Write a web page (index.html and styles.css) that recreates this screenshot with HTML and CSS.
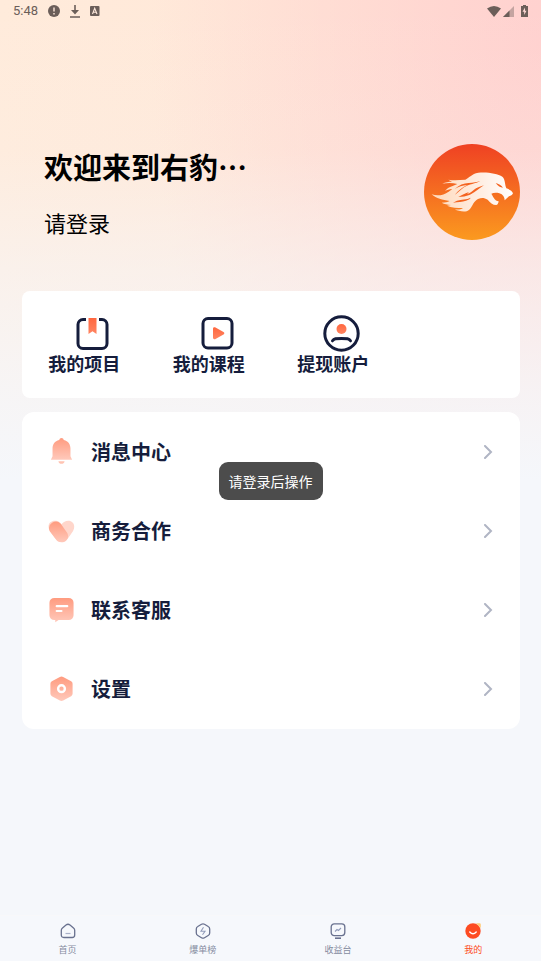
FILE: index.html
```html
<!DOCTYPE html>
<html lang="zh-CN">
<head>
<meta charset="utf-8">
<meta name="viewport" content="width=device-width, initial-scale=1">
<title>我的</title>
<link rel="stylesheet" href="styles.css">
</head>
<body>
<svg class="defs" width="0" height="0" aria-hidden="true">
  <defs>
    <linearGradient id="peach" x1="0" y1="0" x2="0" y2="1"><stop offset="0" stop-color="#ff9b7f"/><stop offset="1" stop-color="#ffc9bb"/></linearGradient>
    <linearGradient id="coral" x1="0" y1="0" x2="0" y2="1"><stop offset="0" stop-color="#ff673f"/><stop offset="1" stop-color="#ff8562"/></linearGradient>
    <linearGradient id="flame" x1="0" y1="0" x2="0" y2="1"><stop offset="0" stop-color="#ef4123"/><stop offset="1" stop-color="#fb9a1f"/></linearGradient>
    <linearGradient id="mane" x1="0" y1="0" x2="1" y2="0"><stop offset="0" stop-color="#ffd9bb"/><stop offset=".65" stop-color="#fff0e6"/><stop offset="1" stop-color="#ffffff"/></linearGradient>
  </defs>
</svg>
<div class="app">
  <header class="status">
    <div class="status-group">
      <span class="clock">5:48</span>
      <svg width="12" height="12" viewBox="0 0 12 12"><circle cx="6" cy="6" r="6" fill="currentColor"/><path d="M6 2.6v4M6 8v1.5" stroke="#ffe9dc" stroke-width="1.4"/></svg>
      <svg width="10" height="13" viewBox="0 0 10 13"><path d="M5 0v7M0 12h10" fill="none" stroke="currentColor" stroke-width="1.600"/><path d="M1 5h8L5 9.500Z" fill="currentColor"/></svg>
      <svg width="10" height="10" viewBox="0 0 10 10"><rect width="9.500" height="10" rx="1" fill="currentColor"/><path d="M2.500 8 4.700 2.300 7 8M3.300 6.200h2.900" fill="none" stroke="#ffe9dc" stroke-width="1.100"/></svg>
    </div>
    <div class="status-group status-right">
      <svg width="14" height="11" viewBox="0 0 14 11"><path d="M0 2.500Q7-2.500 14 2.500L7 11Z" fill="currentColor"/></svg>
      <svg width="11" height="11" viewBox="0 0 11 11"><path d="M11 0v11H0Z" fill="currentColor" opacity=".4"/><path d="M6.500 4.500V11H0Z" fill="currentColor"/></svg>
      <svg class="battery" width="7" height="12" viewBox="0 0 7 12"><path d="M2 0h3v1h2v11H0V1h2Z" fill="currentColor"/><path d="M4 2.500 1.500 6.800h1.700V10l2.300-4.300H4Z" fill="#ffd9d5"/></svg>
    </div>
  </header>

  <main class="content">
    <section class="profile">
      <div class="greeting">
        <h1>欢迎来到右豹…</h1>
        <a class="login" href="#login">请登录</a>
      </div>
      <svg class="avatar" viewBox="42 43 288 288" role="img" aria-label="头像">
        <circle cx="186" cy="187" r="144" fill="url(#flame)"/>
        <path fill="url(#mane)" d="M65 194C83 200 101 197 116 186L127 178C117 179 111 181 105 184C110 177 117 173 128 169L142 163C126 159 111 160 97 162C106 157 116 156 126 156L115 150C133 153 149 151 166 150C180 143 184 133 205 129C229 126 263 131 277 141C286 149 284 163 289 176C300 180 306 184 309 191C306 197 303 198 297 200L284 212C284 202 279 194 268 191C261 189 251 189 244 192C249 198 252 213 266 215C265 220 264 225 259 226C248 226 240 219 233 210C219 201 206 205 197 213C186 223 184 240 170 245C157 247 144 244 134 239C145 241 153 239 159 235C143 235 124 234 111 228L123 226C112 225 103 223 95 219C106 219 112 217 119 214C97 211 79 207 65 194Z"/>
        <path fill="#f46320" d="M211 154C196 163 178 162 162 173C152 180 143 190 134 196C147 181 157 172 172 166C158 167 145 172 134 178C147 166 161 161 176 160C190 159 201 158 211 154ZM222 167C209 172 200 173 192 180C186 185 180 191 171 193L177 187C163 192 154 197 145 202C158 202 168 200 178 196C191 191 203 179 222 167ZM182 204C170 210 154 209 141 213L129 219C145 217 156 217 168 213C176 210 180 208 182 204ZM257 160C266 163 274 166 279 174C271 173 264 170 257 160Z"/>
      </svg>
    </section>

    <section class="card shortcuts">
      <button type="button">
        <svg viewBox="0 0 38 38"><path d="M13 5.500H10a5 5 0 0 0-5 5V29.500a5 5 0 0 0 5 5H29a5 5 0 0 0 5-5V10.500a5 5 0 0 0-5-5h-3" fill="none" stroke="#151d3c" stroke-width="3"/><path d="M15.500 4h8v16l-4-2.800-4 2.800Z" fill="url(#coral)"/></svg>
        <span>我的项目</span>
      </button>
      <button type="button">
        <svg viewBox="0 0 38 38"><rect x="5" y="4.500" width="29" height="29.500" rx="5" fill="none" stroke="#151d3c" stroke-width="3"/><path d="M15 14.700C15 13.500 16.500 13 17.500 13.600L25.500 18C26.600 18.600 26.600 20 25.500 20.600L17.500 25C16.500 25.500 15 25 15 23.700Z" fill="url(#coral)"/></svg>
        <span>我的课程</span>
      </button>
      <button type="button">
        <svg viewBox="0 0 38 38"><circle cx="19.500" cy="19.500" r="16.700" fill="none" stroke="#151d3c" stroke-width="3"/><circle cx="19.500" cy="15" r="5" fill="url(#coral)"/><path d="M10.500 26.800C12 24.500 14 24.500 19.500 24.500S27 24.500 28.500 26.800" fill="none" stroke="#151d3c" stroke-width="3" stroke-linecap="round"/></svg>
        <span>提现账户</span>
      </button>
    </section>

    <nav class="card menu" aria-label="功能菜单">
      <a href="#messages">
        <svg class="icon" viewBox="0 0 28 28"><path d="M14 0a2.500 2.500 0 0 1 2.400 2C21 3 23.300 6.500 23.300 11v8L25 22.500H3L4.700 19v-8C4.700 6.500 7 3 11.600 2A2.500 2.500 0 0 1 14 0Z" fill="url(#peach)"/><path d="M10.800 24h6.400c-.5 3.700-5.900 3.700-6.400 0Z" fill="#ffc3b2"/></svg>
        <span>消息中心</span>
        <svg class="chevron" viewBox="0 0 10 14"><path d="m2 1 6 6-6 6"/></svg>
      </a>
      <a href="#business">
        <svg class="icon" viewBox="0 0 28 28"><path d="M14 26C9.500 26 7.500 22 2 14.500C-1.500 8.500 2 4 7 4C11 4 12 5.500 14 7.500C16 5.500 18 4 21 4C26 4 29 9 26 14.500C21 22 18.500 26 14 26Z" fill="#ffd6cb"/><path d="M1.800 14.800A7 7 0 0 1 13.200 7L20 16.500C23 22 18 26.500 14 26.300C11 26 9.500 25 8.500 23.500Z" fill="url(#peach)"/></svg>
        <span>商务合作</span>
        <svg class="chevron" viewBox="0 0 10 14"><path d="m2 1 6 6-6 6"/></svg>
      </a>
      <a href="#support">
        <svg class="icon" viewBox="0 0 28 28"><path d="M6.500 2h15A5 5 0 0 1 26.500 7v13a5 5 0 0 1-5 5H11l-3.500 2.200V25h-1a5 5 0 0 1-5-5V7a5 5 0 0 1 5-5Z" fill="url(#peach)"/><path d="M9 10.500h11M9 15.500h5" stroke="#fff" stroke-width="2.200" stroke-linecap="round"/></svg>
        <span>联系客服</span>
        <svg class="chevron" viewBox="0 0 10 14"><path d="m2 1 6 6-6 6"/></svg>
      </a>
      <a href="#settings">
        <svg class="icon" viewBox="0 0 28 28"><path d="M12.300 2Q14 1 15.700 2L24 6.500Q25.500 7.500 25.500 9v10.500q0 1.500-1.500 2.500l-8.300 4.500q-1.700 1-3.400 0L4 22q-1.500-1-1.500-2.500V9Q2.500 7.500 4 6.500Z" fill="url(#peach)"/><circle cx="14" cy="14.200" r="3.500" fill="none" stroke="#fff" stroke-width="2.500"/></svg>
        <span>设置</span>
        <svg class="chevron" viewBox="0 0 10 14"><path d="m2 1 6 6-6 6"/></svg>
      </a>
    </nav>
  </main>

  <nav class="tabs" aria-label="主导航">
    <a href="#home">
      <svg viewBox="0 0 16 16"><path d="M1.300 7.300Q1.300 6 2.500 5L6 2q2-1.500 4 0l3.500 3q1.200 1 1.200 2.300V12q0 2.500-2.500 2.500H3.800Q1.300 14.500 1.300 12Z" fill="none" stroke="currentColor" stroke-width="1.300"/><path d="M5.500 10.500h5" stroke="#a8b0c8" stroke-width="1.200"/></svg>
      <span>首页</span>
    </a>
    <a href="#rank">
      <svg viewBox="0 0 16 16"><path d="M6.500 1.300q1.500-.9 3 0L13.200 3.500q1.500.8 1.500 2.500v4q0 1.700-1.500 2.500L9.500 14.700q-1.500.9-3 0L2.800 12.500Q1.300 11.700 1.300 10V6q0-1.700 1.500-2.500Z" fill="none" stroke="currentColor" stroke-width="1.300"/><path d="M8.500 4.300 6 8.200h4L7.500 11.700" fill="none" stroke="#929cba" stroke-width="1.100"/></svg>
      <span>爆单榜</span>
    </a>
    <a href="#income">
      <svg viewBox="0 0 16 16"><rect x="1.200" y=".8" width="13.600" height="11.800" rx="3" fill="none" stroke="currentColor" stroke-width="1.300"/><path d="m5 8.500 2-2 1.500 1L11 5" fill="none" stroke="#929cba" stroke-width="1.100"/><path d="M5 15.200h6" stroke="currentColor" stroke-width="1.600"/></svg>
      <span>收益台</span>
    </a>
    <a class="active" href="#me" aria-current="page">
      <svg viewBox="0 0 16 16"><circle cx="8" cy="8" r="7.700" fill="#fd4b22"/><path d="M11 .2H14.500Q15.800.2 15.800 1.500V5Z" fill="#ffcc79"/><path d="M4.800 9Q8 12.500 11.200 9" fill="none" stroke="#fff" stroke-width="1.500" stroke-linecap="round"/></svg>
      <span>我的</span>
    </a>
  </nav>
</div>
<div class="toast" role="status">请登录后操作</div>
</body>
</html>
```
FILE: styles.css
```css
* {
  box-sizing: border-box;
}

body {
  margin: 0;
  background: #f5f7fb;
  color: #151d3c;
  font-family: "Noto Sans CJK SC", sans-serif;
}

a {
  color: inherit;
  text-decoration: none;
}

svg {
  display: block;
  flex: none;
}

.defs {
  position: absolute;
}

.app {
  display: flex;
  flex-direction: column;
  min-height: 100vh;
  background:
    linear-gradient(180deg, #f5f7fb00 0, #f5f7fb18 150px, #f5f7fb80 270px, #f5f7fbd0 390px, #f5f7fb 480px),
    radial-gradient(ellipse 390px 680px at 100% 40px, #ffd1cf 0, #ffd1cf00 100%),
    linear-gradient(90deg, #ffebdb, #ffe5d6);
}

.status {
  display: flex;
  justify-content: space-between;
  align-items: center;
  height: 22px;
  padding: 0 13px;
  color: #6b5e59;
}

.status-group {
  display: flex;
  align-items: center;
  gap: 10px;
}

.status-right {
  gap: 2px;
}

.battery {
  margin-left: 5px;
}

.clock {
  font: 13px/22px Roboto, sans-serif;
}

.content {
  flex: 1;
  padding: 0 21px 0 22px;
}

.profile {
  display: flex;
  justify-content: space-between;
  align-items: flex-start;
  padding: 122px 0 51px 22px;
}

.greeting {
  display: grid;
  gap: 18px;
}

h1 {
  margin: 0;
  color: #000;
  font-size: 29px;
  line-height: 44px;
}

.login {
  color: #000;
  font-size: 22px;
  line-height: 32px;
}

.avatar {
  width: 96px;
  height: 96px;
}

.card {
  margin-bottom: 14px;
  background: #fff;
  border-radius: 8px;
}

.shortcuts {
  display: grid;
  grid-template-columns: repeat(4, 1fr);
  padding: 23px 0 24px;
}

.shortcuts button {
  display: grid;
  justify-items: center;
  padding: 0;
  border: 0;
  background: none;
  color: inherit;
  font: 700 18px/22px "Noto Sans CJK SC", sans-serif;
}

.shortcuts svg {
  width: 38px;
  height: 38px;
  margin-left: 16px;
}

.menu {
  padding-bottom: 1px;
  border-radius: 12px;
}

.menu a {
  display: flex;
  align-items: center;
  gap: 16px;
  height: 79px;
  padding: 0 27px 0 26px;
  font-size: 20px;
  font-weight: 700;
}

.menu span {
  flex: 1;
}

.icon {
  width: 27px;
  height: 27px;
}

.chevron {
  width: 10px;
  height: 14px;
  fill: none;
  stroke: #b0b5c4;
  stroke-width: 2;
  stroke-linecap: round;
}

.tabs {
  display: grid;
  grid-template-columns: repeat(4, 1fr);
  padding: 7px 0 4px;
  border-top: 1px solid #f8f8fa;
  background: #f6f8fc;
}

.tabs a {
  display: grid;
  justify-items: center;
  gap: 4px;
  color: #69718f;
  font-size: 9px;
  line-height: 14px;
}

.tabs span {
  color: #858b9f;
}

.tabs svg {
  width: 16px;
  height: 16px;
}

.tabs .active span {
  color: #fd4b22;
}

.toast {
  position: fixed;
  top: 50%;
  left: 50%;
  padding: 8px 10px;
  transform: translate(-50%, -50%);
  border-radius: 9px;
  background: #4c4c4c;
  color: #fff;
  font-size: 14px;
  line-height: 22px;
  white-space: nowrap;
}
```
